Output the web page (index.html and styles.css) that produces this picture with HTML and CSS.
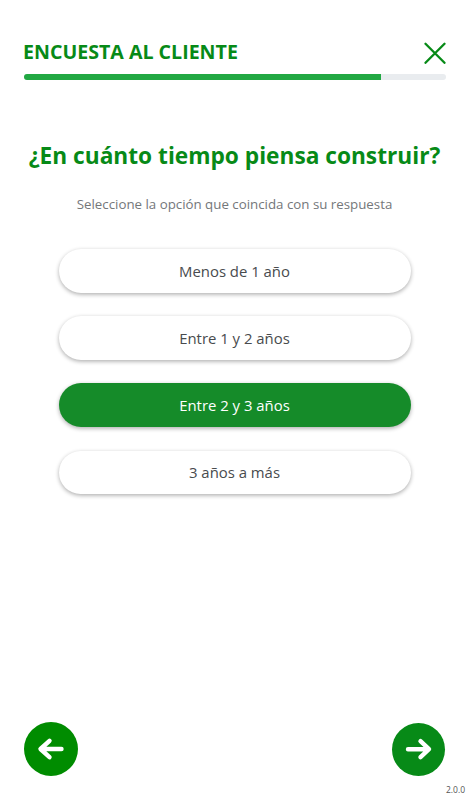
FILE: index.html
```html
<!DOCTYPE html>
<html lang="es">

<head>
  <meta charset="UTF-8" />
  <meta name="viewport" content="width=device-width, initial-scale=1.0" />
  <title>Encuesta al cliente</title>
  <link rel="stylesheet" href="styles.css">
</head>

<body>
  <header class="header">
    <h1>ENCUESTA AL CLIENTE</h1>
    <button class="close" aria-label="Cerrar">
      <svg width="22" height="22" viewBox="0 0 22 22">
        <path d="M1.5 1.8L20.5 20.8M20.5 1.8L1.5 20.8" />
      </svg>
    </button>
  </header>
  <div class="progress">
    <div class="progress-bar" style="width: 84.6%"></div>
  </div>

  <main class="question">
    <h2>¿En cuánto tiempo piensa construir?</h2>
    <p>Seleccione la opción que coincida con su respuesta</p>
    <div class="options">
      <button class="option">Menos de 1 año</button>
      <button class="option">Entre 1 y 2 años</button>
      <button class="option active">Entre 2 y 3 años</button>
      <button class="option">3 años a más</button>
    </div>
  </main>

  <footer class="nav">
    <button class="prev" aria-label="Anterior">
      <svg width="54" height="54" viewBox="0 0 54 54">
        <path d="M37.5 27H17M25.5 18.8L16.5 27L25.5 35.2" />
      </svg>
    </button>
    <button class="next" aria-label="Siguiente">
      <svg width="53" height="53" viewBox="0 0 53 53">
        <path d="M16 26.2H36M28.5 18.2L37 26.2L28.5 34.2" />
      </svg>
    </button>
  </footer>
  <div class="version">2.0.0</div>
</body>

</html>
```
FILE: styles.css
```css
* {
  margin: 0;
  padding: 0;
  box-sizing: border-box;
}

body {
  height: 800px;
  padding: 40px 24px 0;
  display: flex;
  flex-direction: column;
  background: #fff;
  font-family: "Open Sans", sans-serif;
  overflow: hidden;
}

button {
  border: none;
  background: none;
  font-family: inherit;
}

svg {
  display: block;
  fill: none;
  stroke-linecap: round;
  stroke-linejoin: round;
}

.header {
  height: 34px;
  display: flex;
  justify-content: space-between;
  align-items: flex-start;
}

h1 {
  margin-left: -1px;
  color: #078a17;
  font-size: 19.6px;
  font-weight: 700;
  line-height: 24px;
  white-space: nowrap;
}

.close {
  margin: 2px -1px 0 0;
}

.close svg {
  stroke: #078a17;
  stroke-width: 2.3;
}

.progress {
  height: 6px;
  margin: 0 -0.5px;
  border-radius: 3px;
  background: #e9ecef;
  overflow: hidden;
}

.progress-bar {
  height: 100%;
  background: #22a843;
}

.question {
  flex: 1;
  text-align: center;
}

h2 {
  margin: 60px -20px 0;
  color: #078a17;
  font-size: 22.7px;
  font-weight: 700;
  line-height: 32px;
  white-space: nowrap;
}

.question p {
  margin-top: 22px;
  color: #74777a;
  font-size: 13.3px;
  line-height: 20px;
}

.options {
  width: 352px;
  margin: 35px auto 0;
  display: flex;
  flex-direction: column;
  gap: 23.7px;
}

.option {
  height: 43.5px;
  border-radius: 22px;
  background: #fff;
  box-shadow: 0 1.5px 4px rgba(0, 0, 0, 0.32);
  color: #484b4e;
  font-size: 14.9px;
}

.option.active {
  background: #158b29;
  color: #fff;
}

.nav {
  display: flex;
  justify-content: space-between;
  align-items: center;
}

.nav button {
  border-radius: 50%;
}

.nav svg {
  stroke: #fff;
  stroke-width: 4.4;
}

.prev {
  background: #008c00;
}

.next {
  background: #078a17;
}

.version {
  height: 24px;
  margin-right: -20px;
  padding-top: 8px;
  color: #555;
  font-size: 8.5px;
  line-height: 12px;
  text-align: right;
}
```
